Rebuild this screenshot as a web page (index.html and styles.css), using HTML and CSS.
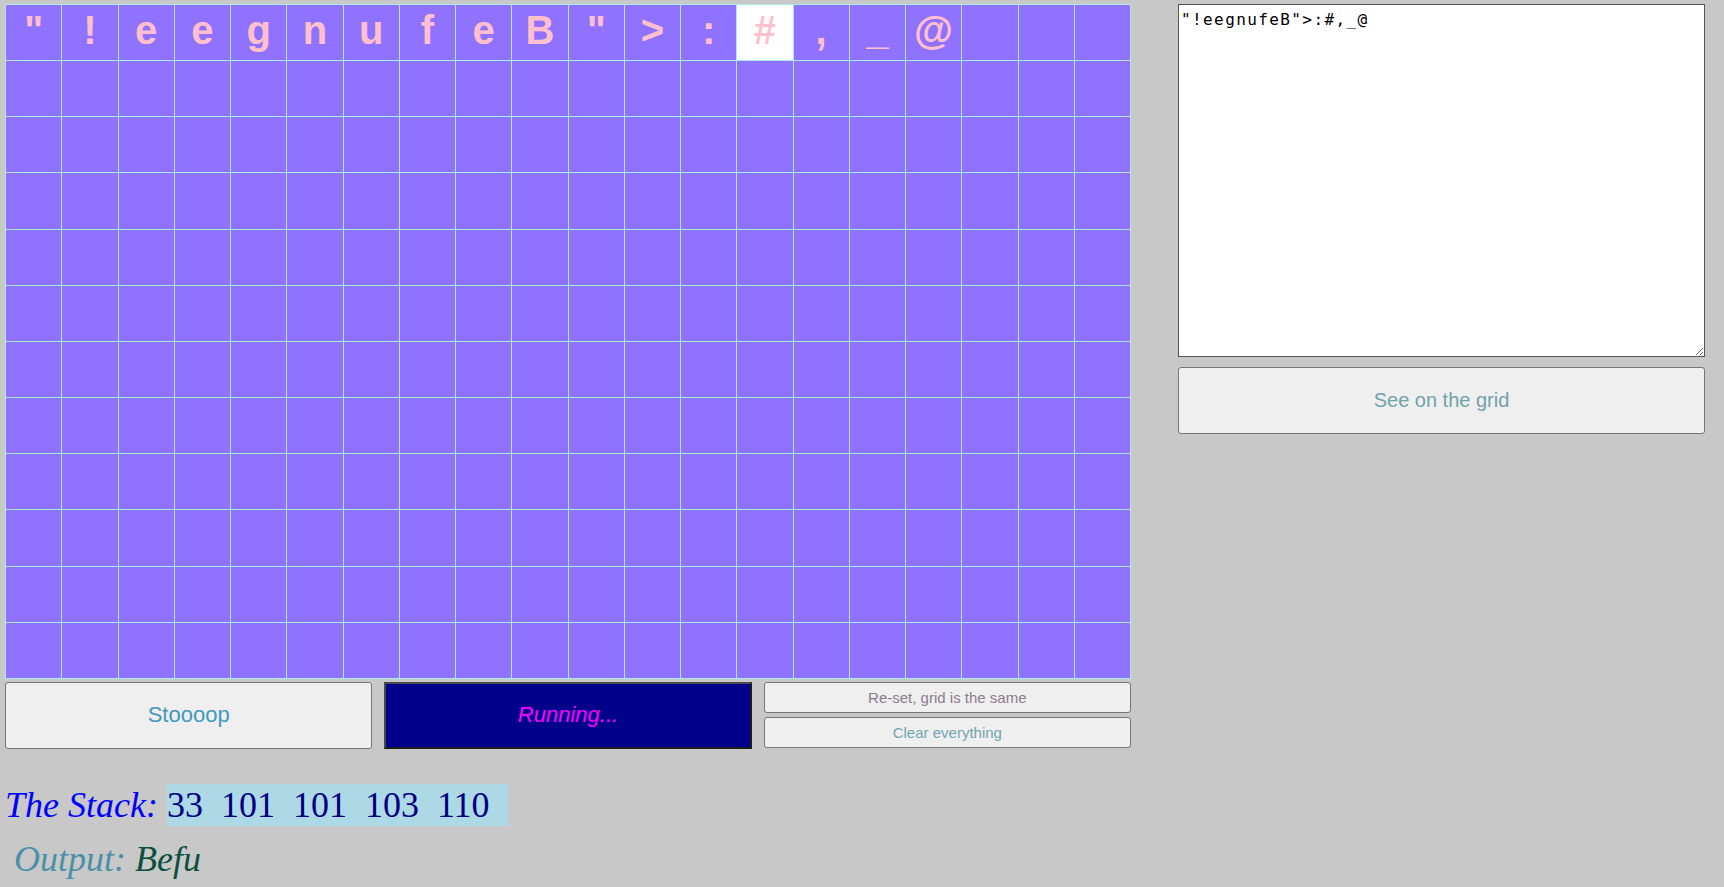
FILE: index.html
```html
<!DOCTYPE html>
<html>
<head>
<meta charset="utf-8">
<title>Befunge</title>
<link rel="stylesheet" href="styles.css">
</head>
<body>
<div class="page">
  <div class="main">
    <div class="left">
      <div class="grid">
        <div class="cell">"</div><div class="cell">!</div><div class="cell">e</div><div class="cell">e</div><div class="cell">g</div><div class="cell">n</div><div class="cell">u</div><div class="cell">f</div><div class="cell">e</div><div class="cell">B</div><div class="cell">"</div><div class="cell">&gt;</div><div class="cell">:</div><div class="cell current">#</div><div class="cell">,</div><div class="cell">_</div><div class="cell">@</div><div class="cell"></div><div class="cell"></div><div class="cell"></div>
        <div class="cell"></div><div class="cell"></div><div class="cell"></div><div class="cell"></div><div class="cell"></div><div class="cell"></div><div class="cell"></div><div class="cell"></div><div class="cell"></div><div class="cell"></div><div class="cell"></div><div class="cell"></div><div class="cell"></div><div class="cell"></div><div class="cell"></div><div class="cell"></div><div class="cell"></div><div class="cell"></div><div class="cell"></div><div class="cell"></div>
        <div class="cell"></div><div class="cell"></div><div class="cell"></div><div class="cell"></div><div class="cell"></div><div class="cell"></div><div class="cell"></div><div class="cell"></div><div class="cell"></div><div class="cell"></div><div class="cell"></div><div class="cell"></div><div class="cell"></div><div class="cell"></div><div class="cell"></div><div class="cell"></div><div class="cell"></div><div class="cell"></div><div class="cell"></div><div class="cell"></div>
        <div class="cell"></div><div class="cell"></div><div class="cell"></div><div class="cell"></div><div class="cell"></div><div class="cell"></div><div class="cell"></div><div class="cell"></div><div class="cell"></div><div class="cell"></div><div class="cell"></div><div class="cell"></div><div class="cell"></div><div class="cell"></div><div class="cell"></div><div class="cell"></div><div class="cell"></div><div class="cell"></div><div class="cell"></div><div class="cell"></div>
        <div class="cell"></div><div class="cell"></div><div class="cell"></div><div class="cell"></div><div class="cell"></div><div class="cell"></div><div class="cell"></div><div class="cell"></div><div class="cell"></div><div class="cell"></div><div class="cell"></div><div class="cell"></div><div class="cell"></div><div class="cell"></div><div class="cell"></div><div class="cell"></div><div class="cell"></div><div class="cell"></div><div class="cell"></div><div class="cell"></div>
        <div class="cell"></div><div class="cell"></div><div class="cell"></div><div class="cell"></div><div class="cell"></div><div class="cell"></div><div class="cell"></div><div class="cell"></div><div class="cell"></div><div class="cell"></div><div class="cell"></div><div class="cell"></div><div class="cell"></div><div class="cell"></div><div class="cell"></div><div class="cell"></div><div class="cell"></div><div class="cell"></div><div class="cell"></div><div class="cell"></div>
        <div class="cell"></div><div class="cell"></div><div class="cell"></div><div class="cell"></div><div class="cell"></div><div class="cell"></div><div class="cell"></div><div class="cell"></div><div class="cell"></div><div class="cell"></div><div class="cell"></div><div class="cell"></div><div class="cell"></div><div class="cell"></div><div class="cell"></div><div class="cell"></div><div class="cell"></div><div class="cell"></div><div class="cell"></div><div class="cell"></div>
        <div class="cell"></div><div class="cell"></div><div class="cell"></div><div class="cell"></div><div class="cell"></div><div class="cell"></div><div class="cell"></div><div class="cell"></div><div class="cell"></div><div class="cell"></div><div class="cell"></div><div class="cell"></div><div class="cell"></div><div class="cell"></div><div class="cell"></div><div class="cell"></div><div class="cell"></div><div class="cell"></div><div class="cell"></div><div class="cell"></div>
        <div class="cell"></div><div class="cell"></div><div class="cell"></div><div class="cell"></div><div class="cell"></div><div class="cell"></div><div class="cell"></div><div class="cell"></div><div class="cell"></div><div class="cell"></div><div class="cell"></div><div class="cell"></div><div class="cell"></div><div class="cell"></div><div class="cell"></div><div class="cell"></div><div class="cell"></div><div class="cell"></div><div class="cell"></div><div class="cell"></div>
        <div class="cell"></div><div class="cell"></div><div class="cell"></div><div class="cell"></div><div class="cell"></div><div class="cell"></div><div class="cell"></div><div class="cell"></div><div class="cell"></div><div class="cell"></div><div class="cell"></div><div class="cell"></div><div class="cell"></div><div class="cell"></div><div class="cell"></div><div class="cell"></div><div class="cell"></div><div class="cell"></div><div class="cell"></div><div class="cell"></div>
        <div class="cell"></div><div class="cell"></div><div class="cell"></div><div class="cell"></div><div class="cell"></div><div class="cell"></div><div class="cell"></div><div class="cell"></div><div class="cell"></div><div class="cell"></div><div class="cell"></div><div class="cell"></div><div class="cell"></div><div class="cell"></div><div class="cell"></div><div class="cell"></div><div class="cell"></div><div class="cell"></div><div class="cell"></div><div class="cell"></div>
        <div class="cell"></div><div class="cell"></div><div class="cell"></div><div class="cell"></div><div class="cell"></div><div class="cell"></div><div class="cell"></div><div class="cell"></div><div class="cell"></div><div class="cell"></div><div class="cell"></div><div class="cell"></div><div class="cell"></div><div class="cell"></div><div class="cell"></div><div class="cell"></div><div class="cell"></div><div class="cell"></div><div class="cell"></div><div class="cell"></div>
      </div>
      <div class="controls">
        <button class="btn stop">Stoooop</button>
        <button class="btn run">Running...</button>
        <div class="stack-btns">
          <button class="btn small reset">Re-set, grid is the same</button>
          <button class="btn small clear">Clear everything</button>
        </div>
      </div>
    </div>
    <div class="right">
      <textarea class="code" spellcheck="false">"!eegnufeB"&gt;:#,_@</textarea>
      <button class="btn see">See on the grid</button>
    </div>
  </div>
  <div class="stack-line"><span class="stack-label">The Stack:</span> <span class="stack">33&nbsp; 101&nbsp; 101&nbsp; 103&nbsp; 110&nbsp;&nbsp;</span></div>
  <div class="output-line">&nbsp;<span class="out-label">Output:</span> <span class="out">Befu</span></div>
</div>
</body>
</html>
```

FILE: styles.css
```css
html, body {
  margin: 0;
  padding: 0;
  background: #c8c8c8;
}

.page {
  padding: 4px 0 0 5px;
}

.main {
  display: flex;
  align-items: flex-start;
}

.left {
  width: 1126px;
}

.grid {
  box-sizing: border-box;
  width: 1126px;
  display: grid;
  grid-template-columns: repeat(20, 1fr);
  grid-auto-rows: 55.17px;
  gap: 1px;
  padding: 1px;
  background: #a4ece4;
}

.cell {
  background: #8f72ff;
  color: #ffc0cb;
  font-family: "Liberation Sans", Arial, sans-serif;
  font-size: 40px;
  font-weight: bold;
  line-height: 1;
  display: flex;
  align-items: center;
  justify-content: center;
  padding-bottom: 6px;
  box-sizing: border-box;
}

.cell.current {
  background: #ffffff;
}

.controls {
  display: flex;
  gap: 12px;
  margin-top: 3px;
  height: 67px;
}

.btn {
  font-family: "Liberation Sans", Arial, sans-serif;
  background: #efefef;
  border: 1px solid #767676;
  border-radius: 3px;
  padding: 0;
  margin: 0;
  box-sizing: border-box;
}

.controls > .btn,
.controls > .stack-btns {
  flex: 0 0 calc((100% - 24px) / 3);
  min-width: 0;
}

.stop {
  font-size: 22px;
  color: #4499bb;
}

.run {
  font-size: 22px;
  font-style: italic;
  color: #ff00ff;
  background: #00008b;
  border: 2px solid;
  border-color: #4a4a4a #1c1c1c #1c1c1c #4a4a4a;
  border-radius: 0;
}

.stack-btns {
  display: flex;
  flex-direction: column;
  gap: 4px;
}

.small {
  height: 31px;
  font-size: 15px;
}

.reset {
  color: #8c7b8e;
}

.clear {
  color: #72a6ae;
}

.right {
  margin-left: 47px;
  width: 527px;
}

.code {
  display: block;
  box-sizing: border-box;
  width: 100%;
  height: 353px;
  margin: 0;
  padding: 5px 2px 2px;
  border: 1px solid #555555;
  background: #ffffff;
  color: #000000;
  font-family: "DejaVu Sans Mono", monospace;
  font-size: 16px;
  letter-spacing: 1.4px;
}

.see {
  display: block;
  width: 100%;
  height: 67px;
  margin-top: 10px;
  font-size: 20px;
  color: #6fa3ab;
}

.stack-line,
.output-line {
  font-family: "Liberation Serif", "Times New Roman", serif;
  font-size: 36px;
  line-height: normal;
}

.stack-line {
  margin-top: 35px;
}

.output-line {
  margin-top: 12px;
}

.stack-label {
  font-style: italic;
  color: #0000ff;
}

.stack {
  background: #add8e6;
  color: #000080;
  padding: 1px 0;
}

.out-label {
  font-style: italic;
  color: #4a90a8;
}

.out {
  font-style: italic;
  color: #0b4f3e;
}
```
